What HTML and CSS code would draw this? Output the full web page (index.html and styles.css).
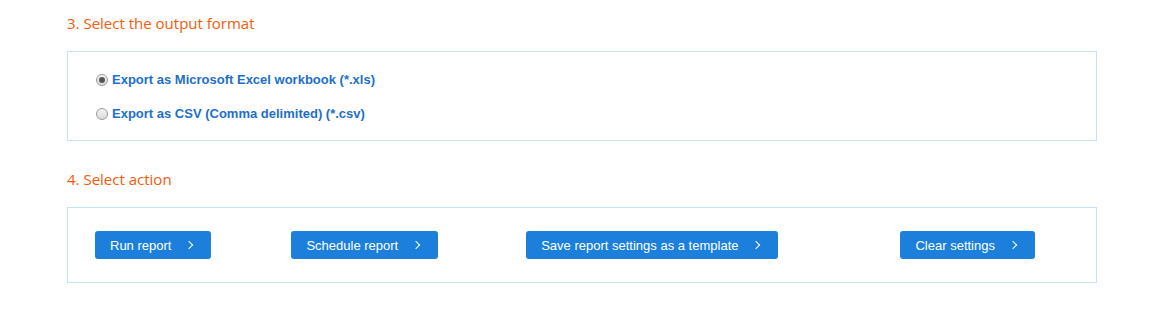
FILE: index.html
```html
<!DOCTYPE html>
<html lang="en">
<head>
    <meta charset="UTF-8">
    <title>Report export</title>
    <link rel="stylesheet" href="styles.css">
</head>
<body>

    <h2 class="step-title">3. Select the output format</h2>
    <div class="panel format-panel">
        <label class="radio-row">
            <input type="radio" name="format" checked>
            <span>Export as Microsoft Excel workbook (*.xls)</span>
        </label>
        <label class="radio-row">
            <input type="radio" name="format">
            <span>Export as CSV (Comma delimited) (*.csv)</span>
        </label>
    </div>

    <h2 class="step-title">4. Select action</h2>
    <div class="panel action-panel">
        <button class="btn btn-run">Run report</button>
        <button class="btn btn-schedule">Schedule report</button>
        <button class="btn btn-template">Save report settings as a template</button>
        <button class="btn btn-clear">Clear settings</button>
    </div>

</body>
</html>
```

FILE: styles.css
```css
body {
    margin: 0;
    padding: 13px 65px 0 67px;
    background: #fff;
    font-family: "Liberation Sans", Arial, sans-serif;
}

.step-title {
    margin: 0 0 17px;
    font-family: "Open Sans", sans-serif;
    font-size: 15px;
    font-weight: normal;
    color: #f55a0a;
    line-height: 21px;
}

.panel {
    border: 1px solid #c5e2f7;
    margin-bottom: 28px;
}

.format-panel {
    padding: 19px 27px 18px;
}

.radio-row {
    display: flex;
    align-items: center;
    height: 17px;
    margin-bottom: 17px;
    font-size: 13px;
    font-weight: bold;
    color: #1e6fc8;
    cursor: pointer;
}

.radio-row:last-child {
    margin-bottom: 0;
}

.radio-row input {
    appearance: none;
    -webkit-appearance: none;
    width: 12px;
    height: 12px;
    margin: 0 4px 0 1px;
    border: 1px solid #9a9a9a;
    border-radius: 50%;
    background: linear-gradient(#f4f4f4, #dcdcdc);
    position: relative;
}

.radio-row input:checked::after {
    content: "";
    position: absolute;
    left: 2px;
    top: 2px;
    width: 6px;
    height: 6px;
    border-radius: 50%;
    background: #555;
}

.action-panel {
    display: flex;
    padding: 23px 27px 23px;
}

.btn {
    height: 28px;
    padding: 0 40px 0 15px;
    border: none;
    border-radius: 3px;
    background: #1b7fdb;
    color: #fff;
    font-family: "Liberation Sans", Arial, sans-serif;
    font-size: 13px;
    position: relative;
    cursor: pointer;
}

.btn::after {
    content: "";
    position: absolute;
    right: 19px;
    top: 11px;
    width: 5px;
    height: 5px;
    border-top: 1.5px solid #fff;
    border-right: 1.5px solid #fff;
    transform: rotate(45deg);
}

.btn-schedule { margin-left: 80px; }
.btn-template { margin-left: 88px; }
.btn-clear { margin-left: 122px; }
```
